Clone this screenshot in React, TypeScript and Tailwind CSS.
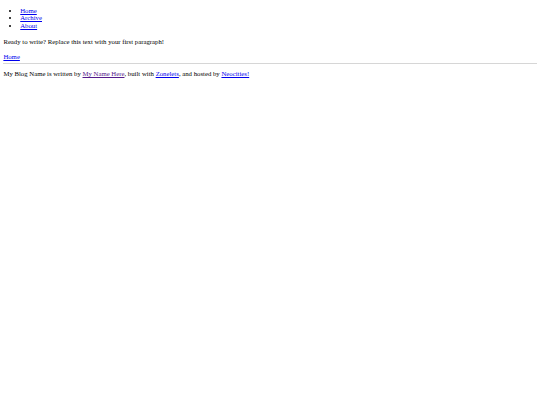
export default function App() {
  return (
    <div className="flex min-h-screen flex-col bg-white p-[3.375px] font-['Liberation_Serif',serif] text-[6.75px] leading-[7.5px] text-black">
      <ul className="mt-[3.25px] list-disc pl-[16.875px]">
        <li><a href="#" className="text-[#0000ee] underline">Home</a></li>
        <li><a href="#" className="text-[#0000ee] underline">Archive</a></li>
        <li><a href="#" className="text-[#0000ee] underline">About</a></li>
      </ul>
      <p className="mt-[9px]">Ready to write? Replace this text with your first paragraph!</p>
      <div className="mt-[7.5px]">
        <a href="#" className="text-[#0000ee] underline">Home</a>
      </div>
      <hr className="mt-[2.25px] border-t border-[#d6d6d6]" />
      <p className="mt-[6.25px]">
        My Blog Name is written by{" "}
        <a href="#" className="text-[#551a8b] underline">My Name Here</a>, built with{" "}
        <a href="#" className="text-[#0000ee] underline">Zonelets</a>, and hosted by{" "}
        <a href="#" className="text-[#0000ee] underline">Neocities!</a>
      </p>
    </div>
  );
}
